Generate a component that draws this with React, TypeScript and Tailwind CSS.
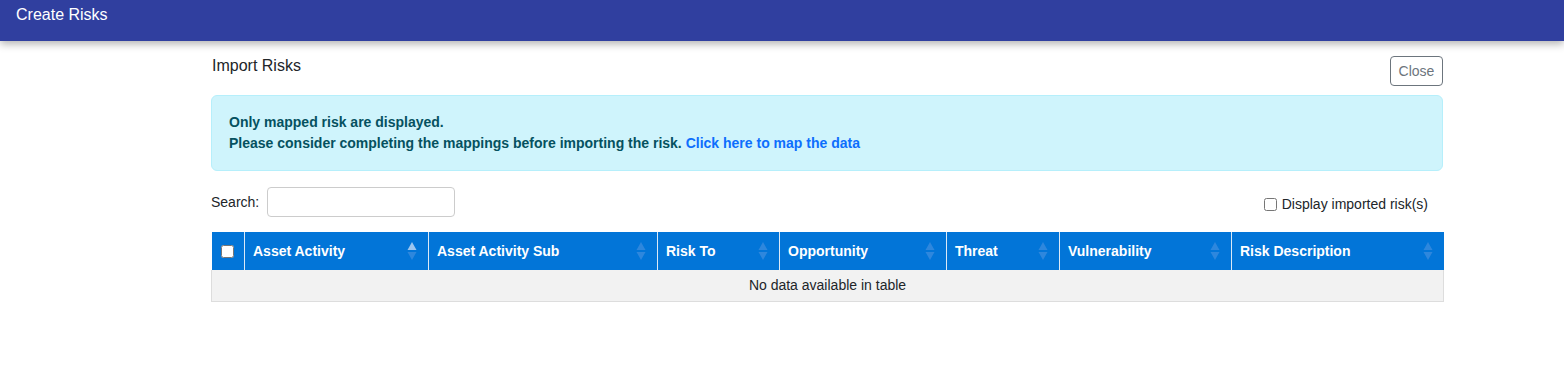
import React from "react";

const cols = [
  { label: "Asset Activity", w: 184, active: true },
  { label: "Asset Activity Sub", w: 229 },
  { label: "Risk To", w: 122 },
  { label: "Opportunity", w: 167 },
  { label: "Threat", w: 113 },
  { label: "Vulnerability", w: 172 },
  { label: "Risk Description", w: 212 },
];

function SortIcon({ active }: { active?: boolean }) {
  return (
    <svg width="10" height="20" viewBox="0 0 10 20" className="absolute right-[11px] top-[9px]">
      <polygon points="5,1 9.5,9 0.5,9" fill={active ? "#9cc6f0" : "#2e87dd"} />
      <polygon points="0.5,11 9.5,11 5,19" fill="#2e87dd" />
    </svg>
  );
}

export default function App() {
  return (
    <div className="min-h-[365px] bg-white" style={{ fontFamily: '"Liberation Sans", Arial, sans-serif' }}>
      <header className="relative z-10 h-[41px] bg-[#303f9f] pl-4 pt-[3px] text-[16px] leading-6 text-white shadow-[0_3px_8px_rgba(0,0,0,0.3)]">
        Create Risks
      </header>
      <main className="ml-[211px] w-[1232px] pt-[13px] text-[#212529]">
        <div className="flex items-start justify-between">
          <div className="pl-px text-[16px] leading-6">Import Risks</div>
          <button className="mt-[2px] h-[30px] w-[53px] rounded-[4px] border border-[#6c757d] text-[14px] text-[#6c757d]">
            Close
          </button>
        </div>
        <div className="mt-[9px] rounded-[6px] border border-[#b6effb] bg-[#cff4fc] px-[17px] py-4 text-[14px] font-bold leading-[21px] text-[#055160]">
          <div>Only mapped risk are displayed.</div>
          <div>
            Please consider completing the mappings before importing the risk.{" "}
            <a className="cursor-pointer text-[#0d6efd]">Click here to map the data</a>
          </div>
        </div>
        <div className="mt-[16px] flex items-center justify-between">
          <label className="flex items-center text-[14px]">
            <span>Search:</span>
            <input className="ml-[8px] h-[30px] w-[188px] rounded-[4px] border border-[#cccccc] px-2 outline-none" />
          </label>
          <label className="mr-[15px] mt-[4px] flex items-center text-[14px]">
            <input type="checkbox" className="mr-[5px] h-[13px] w-[13px]" />
            <span>Display imported risk(s)</span>
          </label>
        </div>
        <table className="mt-[15px] w-[1232px] table-fixed border-collapse">
          <colgroup>
            <col style={{ width: 33 }} />
            {cols.map((c) => (
              <col key={c.label} style={{ width: c.w }} />
            ))}
          </colgroup>
          <thead>
            <tr className="h-[38px] bg-[#0275d8] text-white">
              <th className="border-r border-[#dbe9f7] p-0 pl-[9px] text-left align-middle">
                <input type="checkbox" className="block h-[13px] w-[13px]" />
              </th>
              {cols.map((c, i) => (
                <th
                  key={c.label}
                  className={`relative p-0 pl-[8px] text-left text-[14px] font-bold ${i < cols.length - 1 ? "border-r border-[#dbe9f7]" : ""}`}
                >
                  {c.label}
                  <SortIcon active={c.active} />
                </th>
              ))}
            </tr>
          </thead>
          <tbody>
            <tr className="h-[31px] bg-[#f2f2f2]">
              <td colSpan={8} className="border border-t-0 border-[#dddddd] text-center text-[14px]">
                No data available in table
              </td>
            </tr>
          </tbody>
        </table>
      </main>
    </div>
  );
}
